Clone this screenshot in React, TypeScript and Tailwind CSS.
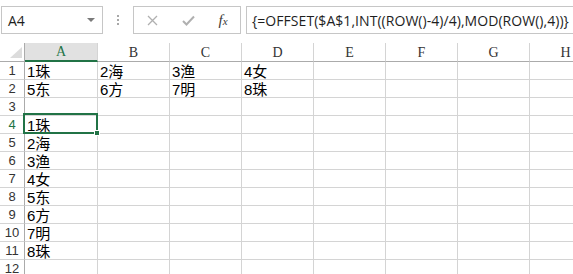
import React from "react";

const cellFont = { fontFamily: '"Liberation Serif","Noto Sans CJK SC",serif' };

const COLS = ["A", "B", "C", "D", "E", "F", "G", "H"];
const data: Record<string, string> = {
  "1A": "1珠", "1B": "2海", "1C": "3渔", "1D": "4女",
  "2A": "5东", "2B": "6方", "2C": "7明", "2D": "8珠",
  "4A": "1珠", "5A": "2海", "6A": "3渔", "7A": "4女",
  "8A": "5东", "9A": "6方", "10A": "7明", "11A": "8珠",
};

export default function App() {
  const rows = Array.from({ length: 12 }, (_, i) => i + 1);
  return (
    <div className="w-[573px] h-[274px] overflow-hidden bg-white relative">
      {/* formula bar */}
      <div className="h-[43px] flex items-start pt-[6px] overflow-hidden">
        <div className="ml-[1px] w-[102px] h-[28px] shrink-0 border border-[#c6c6c6] flex items-center justify-between pl-[6px] pr-[7px]">
          <span className="text-[14px] text-[#1e1e1e]" style={{ fontFamily: '"Open Sans",sans-serif' }}>A4</span>
          <svg width="8" height="5" viewBox="0 0 8 5"><path d="M0 0 L8 0 L4 4 Z" fill="#7a7a7a" /></svg>
        </div>
        <div className="w-[30px] h-[28px] shrink-0 flex flex-col items-center justify-center gap-[2px]">
          <div className="w-[2px] h-[2px] bg-[#a8a8a8]" />
          <div className="w-[2px] h-[2px] bg-[#a8a8a8]" />
          <div className="w-[2px] h-[2px] bg-[#a8a8a8]" />
        </div>
        <div className="w-[108px] h-[28px] shrink-0 border border-[#c6c6c6] flex items-center">
          <div className="w-[36px] flex justify-center">
            <svg width="11" height="11" viewBox="0 0 11 11"><path d="M1 1 L10 10 M10 1 L1 10" stroke="#b0b0b0" strokeWidth="1.3" /></svg>
          </div>
          <div className="w-[36px] flex justify-center">
            <svg width="13" height="11" viewBox="0 0 13 11"><path d="M1 6 L4.5 9.5 L12 1.5" stroke="#b0b0b0" strokeWidth="2" fill="none" /></svg>
          </div>
          <div className="w-[34px] flex justify-center">
            <span className="italic text-[15px] text-[#3a3a3a] leading-none" style={{ fontFamily: '"Liberation Serif",serif' }}>
              f<span className="text-[11px]">x</span>
            </span>
          </div>
        </div>
        <div className="ml-[5px] flex-1 h-[28px] mr-[-4px] border border-[#c6c6c6] flex items-center pl-[5px]">
          <span className="text-[14px] text-[#1e1e1e] whitespace-nowrap tracking-[0.05px]" style={{ fontFamily: '"Open Sans",sans-serif' }}>
            {"{=OFFSET($A$1,INT((ROW()-4)/4),MOD(ROW(),4))}"}
          </span>
        </div>
      </div>

      {/* grid */}
      <div className="grid grid-cols-[25px_73px_repeat(7,72px)] grid-rows-[19px_repeat(12,18px)]">
        {/* header row */}
        <div className="border-r border-b border-[#ababab] relative flex items-end justify-end pr-[2px] pb-[3px]">
          <svg width="12" height="11" viewBox="0 0 12 11"><path d="M12 0 L12 11 L0 11 Z" fill="#dcdcdc" /></svg>
        </div>
        {COLS.map((c, i) => (
          <div
            key={c}
            className={
              i === 0
                ? "bg-[#e1e1e1] border-b-2 border-r border-b-[#217346] border-r-[#d4d4d4] flex items-center justify-center text-[#217346] text-[14px]"
                : "border-b border-r border-b-[#ababab] border-r-[#d4d4d4] flex items-center justify-center text-[#333] text-[14px]"
            }
            style={cellFont}
          >
            {c}
          </div>
        ))}
        {rows.map((r) => (
          <React.Fragment key={r}>
            <div
              className={
                "border-r border-r-[#ababab] border-b border-b-[#d4d4d4] flex items-end justify-center text-[13px] leading-[17px] " +
                (r === 4 ? "text-[#217346]" : "text-[#333]")
              }
              style={{ fontFamily: '"Liberation Sans",sans-serif' }}
            >
              {r}
            </div>
            {COLS.map((c) => (
              <div
                key={c}
                className="border-r border-b border-[#d4d4d4] flex items-end pl-[2px] text-[15px] leading-[18px] text-black whitespace-nowrap overflow-visible"
                style={{ fontFamily: '"Noto Sans CJK SC",sans-serif' }}
              >
                <span className="leading-[16px] -mb-[1px]" style={{ fontFamily: '"Liberation Sans","Noto Sans CJK SC",sans-serif' }}>
                  {data[`${r}${c}`] ?? ""}
                </span>
              </div>
            ))}
          </React.Fragment>
        ))}
      </div>

      {/* selection */}
      <div className="absolute left-[23px] top-[113px] w-[75px] h-[21px] border-2 border-[#217346] pointer-events-none" />
      <div className="absolute left-[94px] top-[130px] w-[6px] h-[6px] bg-[#217346] border border-white" />
    </div>
  );
}
